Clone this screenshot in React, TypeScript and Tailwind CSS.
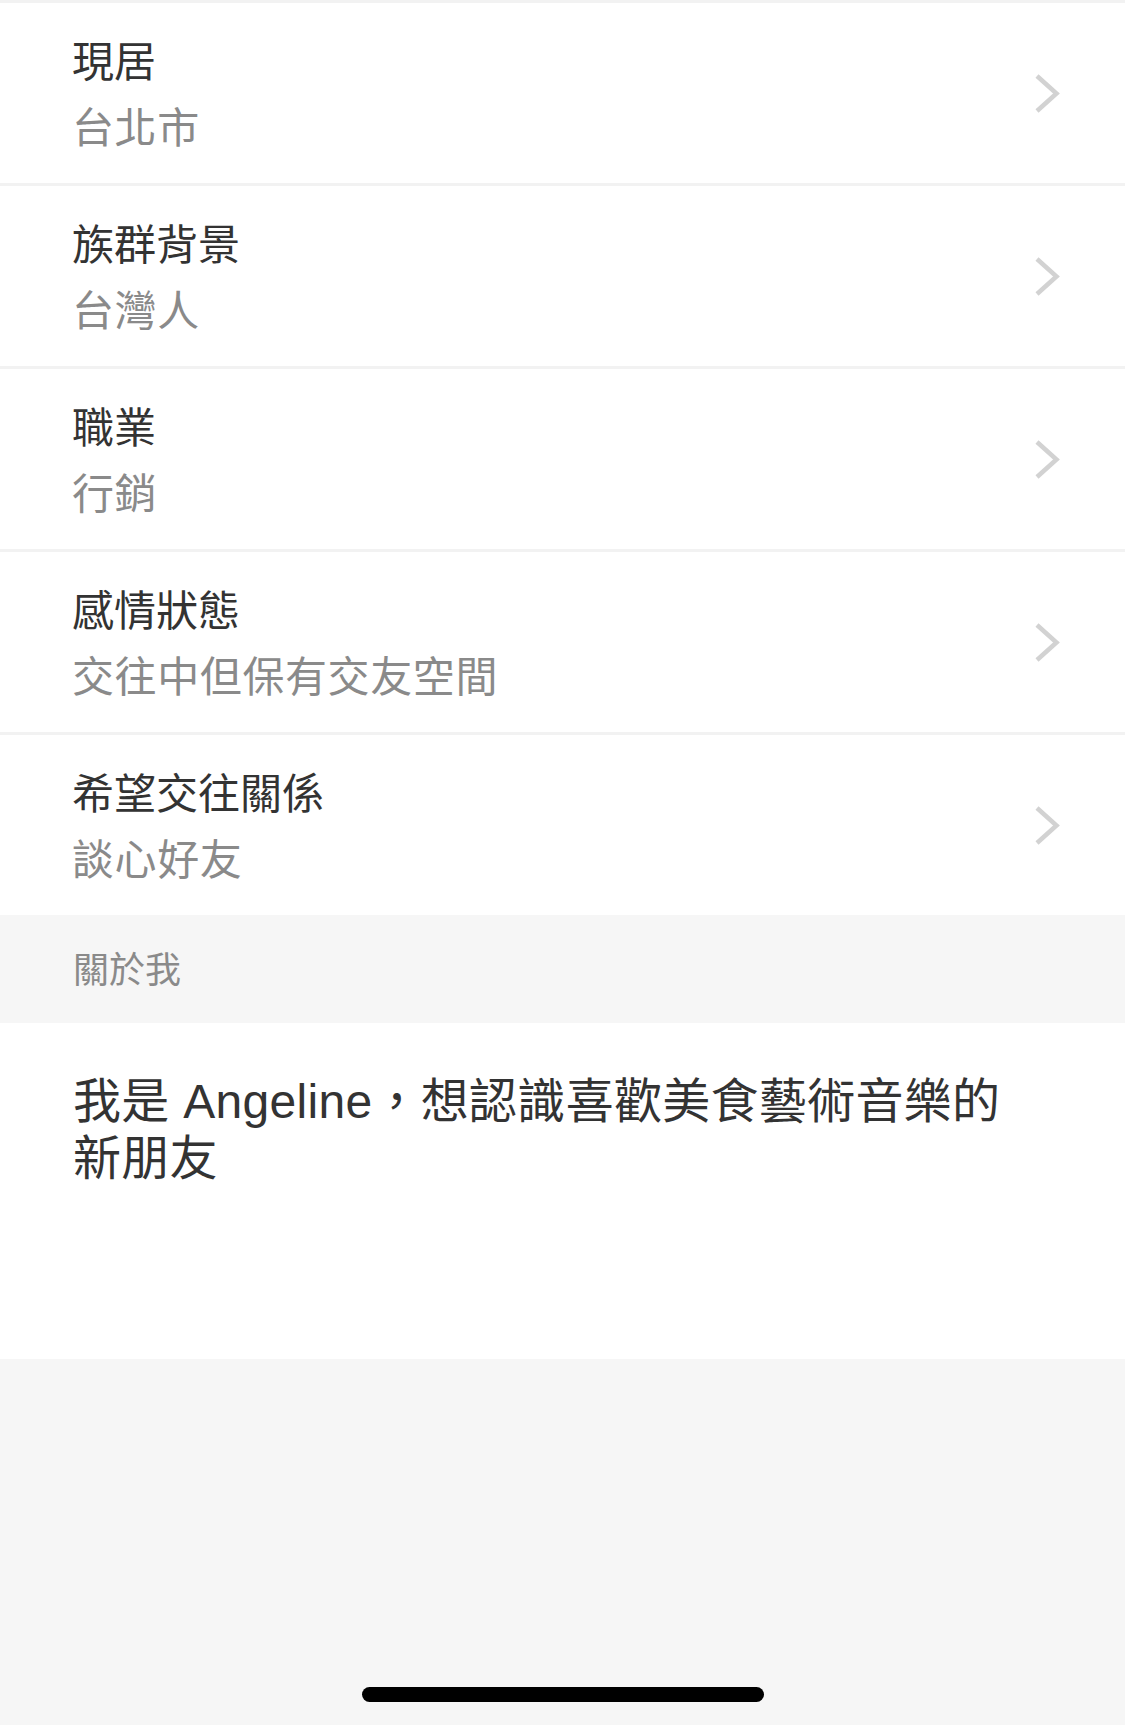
import React from "react";

const rows = [
  { title: "現居", value: "台北市" },
  { title: "族群背景", value: "台灣人" },
  { title: "職業", value: "行銷" },
  { title: "感情狀態", value: "交往中但保有交友空間" },
  { title: "希望交往關係", value: "談心好友" },
];

function Chevron() {
  return (
    <svg width="26" height="41" viewBox="0 0 26 41" fill="none">
      <polyline
        points="3,3 22.5,20.5 3,38"
        stroke="#d2d2d2"
        strokeWidth="4.5"
        strokeLinecap="butt"
        strokeLinejoin="miter"
      />
    </svg>
  );
}

export default function App() {
  return (
    <div
      className="w-[1125px] h-[1725px] bg-[#f6f6f6] flex flex-col"
      style={{ fontFamily: '"Liberation Sans", "Noto Sans CJK TC", sans-serif' }}
    >
      <div className="bg-white flex flex-col">
        {rows.map((r) => (
          <div
            key={r.title}
            className="h-[183px] border-t-[3px] border-[#f2f2f2] flex items-center justify-between pl-[72px] pr-[65px]"
          >
            <div className="flex flex-col mt-[5px]">
              <div className="text-[42px] leading-[66px] text-[#333333]">{r.title}</div>
              <div className="text-[42px] leading-[66px] text-[#8a8a8a] tracking-[0.6px]">{r.value}</div>
            </div>
            <Chevron />
          </div>
        ))}
      </div>
      <div className="h-[108px] flex items-center pl-[73px] pt-[4px] text-[36px] text-[#8a8a8a] bg-[#f6f6f6]">
        關於我
      </div>
      <div className="bg-white h-[336px] pl-[73px] pr-[110px] pt-[50px]">
        <p className="text-[48px] leading-[57px] text-[#333333] tracking-[0.3px]">
          我是 Angeline，想認識喜歡美食藝術音樂的新朋友
        </p>
      </div>
      <div className="flex-1 flex flex-col justify-end items-center pb-[23px]">
        <div className="w-[402px] h-[15px] rounded-full bg-black" />
      </div>
    </div>
  );
}
